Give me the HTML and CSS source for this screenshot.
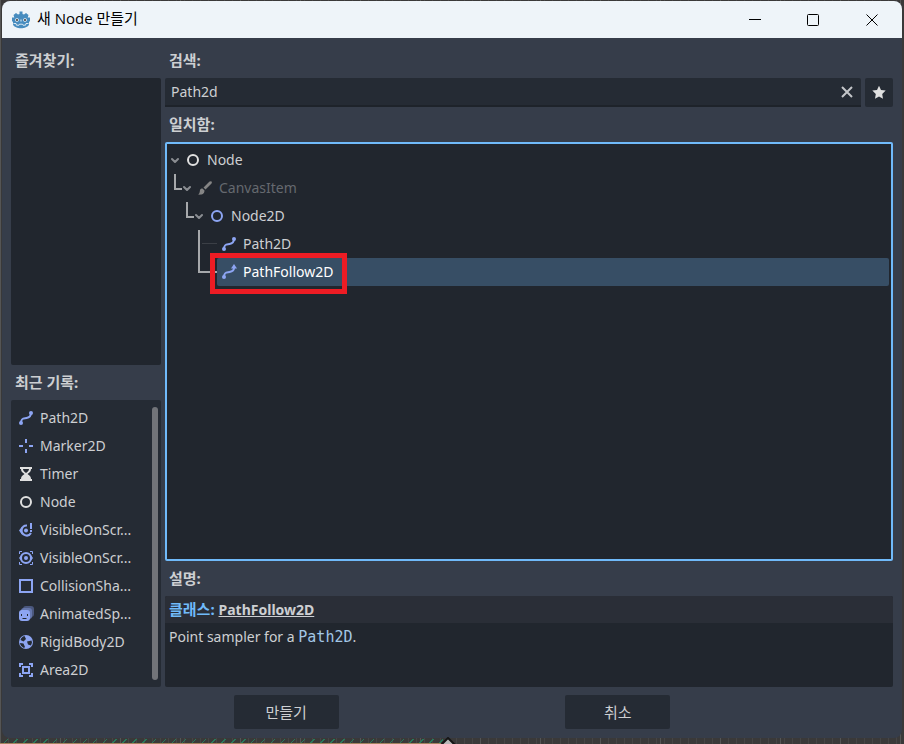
FILE: index.html
```html
<!DOCTYPE html>
<html lang="ko">
<head>
    <meta charset="UTF-8">
    <meta name="viewport" content="width=device-width, initial-scale=1.0">
    <title>새 Node 만들기</title>
    <link rel="stylesheet" href="styles.css">
</head>
<body>
    <!-- Shared icons -->
    <svg class="sprite" aria-hidden="true">
        <symbol id="path" viewBox="0 0 16 16">
            <path d="M3 13C3 7.500 6 8.500 8.500 8S13 6.500 13 3" fill="none" stroke="#8da5f3" stroke-width="2"/>
            <circle cx="3" cy="13" r="2" fill="#8da5f3"/>
            <circle cx="13" cy="3" r="2" fill="#8da5f3"/>
        </symbol>
        <symbol id="path-follow" viewBox="0 0 16 16">
            <path d="M3 13C3 7.500 6 8.500 8.500 8S13 6.500 13 4" fill="none" stroke="#8da5f3" stroke-width="2"/>
            <circle cx="3" cy="13" r="2" fill="#8da5f3"/>
            <path d="M13 0l3 4.500h-6z" fill="#8da5f3"/>
        </symbol>
        <symbol id="node" viewBox="0 0 16 16">
            <circle cx="8" cy="8" r="5" fill="none" stroke="currentColor" stroke-width="2"/>
        </symbol>
        <symbol id="arrow" viewBox="0 0 8 16">
            <path d="M1 7l3 3 3-3" fill="none" stroke="#8a8d92" stroke-width="2" stroke-linecap="round" stroke-linejoin="round"/>
        </symbol>
        <symbol id="guide" viewBox="0 0 12 28">
            <path d="M4 0v15h7" fill="none" stroke="#a6a8ab" stroke-width="2"/>
        </symbol>
    </svg>

    <main class="window">
        <header class="titlebar">
            <svg class="logo" viewBox="0 0 18 18" aria-hidden="true">
                <path d="M1.500 4l2.500-2 2 1.500L7.500 3 7.500.5h3V3l1.500.5L14 2l2.500 2-.8 2.500L18 6.500v4h-1v3c-2 5-14 5-16 0v-3H0v-4l2.300 0z" fill="#478cbf"/>
                <circle cx="5" cy="9" r="1.800" fill="#fff"/>
                <circle cx="13" cy="9" r="1.800" fill="#fff"/>
                <circle cx="5" cy="9" r="1.100" fill="#414042"/>
                <circle cx="13" cy="9" r="1.100" fill="#414042"/>
                <path d="M9 8.500v2" stroke="#e4eef5"/>
                <path d="M1.500 12.500h2.500l.5 1.700h2.500l.5-1h3l.5 1h2.500l.5-1.700h2.500" fill="none" stroke="#fff" stroke-width=".8"/>
            </svg>
            <h1 class="title">새 Node 만들기</h1>
            <div class="window-controls">
                <button type="button" aria-label="최소화"><svg viewBox="0 0 12 12"><path d="M0 5.500h12"/></svg></button>
                <button type="button" aria-label="최대화"><svg viewBox="0 0 12 12"><rect x=".5" y=".5" width="11" height="11" rx="1"/></svg></button>
                <button type="button" aria-label="닫기"><svg viewBox="0 0 12 12"><path d="M.5.5l11 11M11.500.5l-11 11"/></svg></button>
            </div>
        </header>

        <div class="content">
            <div class="columns">
                <aside class="sidebar">
                    <h2 class="label">즐겨찾기:</h2>
                    <div class="favorites"></div>

                    <h2 class="label">최근 기록:</h2>
                    <div class="recent">
                        <ul class="recent-list">
                            <li><button type="button"><svg class="icon"><use href="#path"/></svg>Path2D</button></li>
                            <li><button type="button"><svg class="icon" viewBox="0 0 16 16"><path d="M8 1v4M8 11v4M1 8h4M11 8h4" stroke="#8da5f3" stroke-width="2"/></svg>Marker2D</button></li>
                            <li><button type="button"><svg class="icon" viewBox="0 0 16 16"><path d="M2 1h12v2h-1c0 2-1 3.500-3.500 5 2.500 1.500 3.500 3 3.500 5h1v2H2v-2h1c0-2 1-3.500 3.500-5C4 6.500 3 5 3 3H2zM5 3c0 1.500 1 2.500 3 4 2-1.500 3-2.500 3-4z" fill="#e0e0e0" fill-rule="evenodd"/></svg>Timer</button></li>
                            <li><button type="button"><svg class="icon"><use href="#node"/></svg>Node</button></li>
                            <li><button type="button"><svg class="icon" viewBox="0 0 16 16"><path d="M9 3.500a5 5 0 1 0 4 7.500" fill="none" stroke="#8da5f3" stroke-width="2"/><path d="M1 8.500l3-4v8z" fill="#8da5f3"/><circle cx="8" cy="8.500" r="2" fill="#8da5f3"/><path d="M12 1h2v6h-2zM12 8h2v2h-2z" fill="#8da5f3"/></svg>VisibleOnScr...</button></li>
                            <li><button type="button"><svg class="icon" viewBox="0 0 16 16"><path d="M1.500 4V1.500H4M12 1.500h2.500V4M14.500 12v2.500H12M4 14.500H1.500V12" fill="none" stroke="#8da5f3"/><path d="M1 8l3-4v8zM15 8l-3-4v8z" fill="#8da5f3"/><circle cx="8" cy="8" r="5" fill="none" stroke="#8da5f3" stroke-width="2"/><circle cx="8" cy="8" r="2" fill="#8da5f3"/></svg>VisibleOnScr...</button></li>
                            <li><button type="button"><svg class="icon" viewBox="0 0 16 16"><path d="M2 2h12v12H2z" fill="none" stroke="#8da5f3" stroke-width="2"/></svg>CollisionSha...</button></li>
                            <li><button type="button"><svg class="icon" viewBox="0 0 16 16"><rect x="5" y="0" width="11" height="11" rx="3" fill="#4b587e"/><rect x="3" y="2" width="11" height="11" rx="3" fill="#6577ad"/><rect x="1" y="4" width="11" height="11" rx="3" fill="#8da5f3"/><path d="M3 8h1v2H3zM9 8h1v2H9zM4 12h5l-1 1H5z" fill="#252b34"/></svg>AnimatedSp...</button></li>
                            <li><button type="button"><svg class="icon" viewBox="0 0 16 16"><circle cx="8" cy="8" r="7" fill="#8da5f3"/><path d="M6.500 2C4.500 2.500 3 4 2.500 6l3 1.500L8 5zM9 7.500l4.500-1 .5 2-1 3-3-1zM2 9l3.500.5L7 13l-1 1c-2-1-4-3-4-5z" fill="#252b34"/></svg>RigidBody2D</button></li>
                            <li><button type="button"><svg class="icon" viewBox="0 0 16 16"><path d="M2 5V2h3M11 2h3v3M14 11v3h-3M5 14H2v-3M5 5h6v6H5z" fill="none" stroke="#8da5f3" stroke-width="2"/></svg>Area2D</button></li>
                        </ul>
                        <div class="scrollbar"></div>
                    </div>
                </aside>

                <section class="main">
                    <label class="label" for="search">검색:</label>
                    <div class="search-row">
                        <div class="search-box">
                            <input type="text" id="search" value="Path2d">
                            <button type="button" class="clear" aria-label="지우기"><svg viewBox="0 0 12 12"><path d="M1 1l10 10M11 1L1 11" stroke="#c4c6c9" stroke-width="2"/></svg></button>
                        </div>
                        <button type="button" class="star" aria-label="즐겨찾기"><svg class="icon" viewBox="0 0 16 16"><path d="M8 1.700L6 6 1.300 6.500l3.500 3.400-.8 4.900L8 12.500l4 2.300-.8-4.900 3.500-3.400L10 6z" fill="#e0e0e0"/></svg></button>
                    </div>

                    <h2 class="label">일치함:</h2>
                    <ul class="tree" role="tree">
                        <li class="row" role="treeitem">
                            <svg class="arrow"><use href="#arrow"/></svg>
                            <span class="item"><svg class="icon"><use href="#node"/></svg>Node</span>
                        </li>
                        <li class="row" role="treeitem">
                            <svg class="guide"><use href="#guide"/></svg>
                            <svg class="arrow"><use href="#arrow"/></svg>
                            <span class="item disabled"><svg class="icon" viewBox="0 0 16 16"><path d="M14.500 1.500c-.6-.6-1.400-.4-2 .1L6.500 7.500l2 2 6-6c.5-.6.500-1.400 0-2zM5.500 8.500C3 8.500 3 10 2.800 11.500 2.600 13 2 14 1 14.500c3 .5 6.500 0 6.500-4z" fill="#858585"/></svg>CanvasItem</span>
                        </li>
                        <li class="row level-2" role="treeitem">
                            <svg class="guide"><use href="#guide"/></svg>
                            <svg class="arrow"><use href="#arrow"/></svg>
                            <span class="item"><svg class="icon blue"><use href="#node"/></svg>Node2D</span>
                        </li>
                        <li class="row level-3" role="treeitem">
                            <svg class="guide-wide" viewBox="0 0 22 28"><path d="M4 0v28" stroke="#a6a8ab" stroke-width="2"/><path d="M7 13.500h15" stroke="#3b3f46"/></svg>
                            <span class="item"><svg class="icon"><use href="#path"/></svg>Path2D</span>
                        </li>
                        <li class="row level-3" role="treeitem" aria-selected="true">
                            <svg class="guide-wide" viewBox="0 0 22 28"><path d="M4 0v14h18" fill="none" stroke="#a6a8ab" stroke-width="2"/></svg>
                            <span class="item selected"><svg class="icon"><use href="#path-follow"/></svg>PathFollow2D</span>
                            <span class="highlight"></span>
                        </li>
                    </ul>

                    <h2 class="label">설명:</h2>
                    <div class="description">
                        <p class="class-name">클래스: <a href="#">PathFollow2D</a></p>
                        <p class="summary">Point sampler for a <code>Path2D</code>.</p>
                    </div>
                </section>
            </div>

            <footer class="actions">
                <button type="button">만들기</button>
                <button type="button">취소</button>
            </footer>
        </div>
    </main>
    <svg class="timeline-key" viewBox="0 0 16 16" aria-hidden="true"><path d="M8 1l7 7-7 7-7-7z" fill="#b8b8b8" stroke="#161616" stroke-width="2"/></svg>
</body>
</html>
```

FILE: styles.css
```css
* {
    box-sizing: border-box;
}

body {
    margin: 0;
    height: 100vh;
    padding: 1px 2px 6px;
    overflow: hidden;
    font-family: "Noto Sans", "Noto Sans CJK KR", sans-serif;
    font-size: 14px;
    line-height: 18px;
    color: #cdcfd2;
    /* editor showing around the dialog */
    background:
        linear-gradient(#a5835f, #a5835f) left bottom / 49% 1px no-repeat,
        repeating-linear-gradient(135deg, transparent 0 5px, #277a5c 5px 6px, transparent 6px 7px) left bottom / 49% 5px no-repeat,
        repeating-linear-gradient(90deg, #555 0 1px, transparent 1px 60px),
        repeating-linear-gradient(90deg, #464545 0 1px, #3a3939 1px 8px);
}

h1, h2, p, ul {
    margin: 0;
    padding: 0;
    font-size: 14px;
}

ul {
    list-style: none;
}

button {
    padding: 0;
    border: 0;
    background: none;
    color: inherit;
    font: inherit;
}

svg {
    display: block;
    flex: none;
}

.sprite {
    display: none;
}

.icon {
    width: 16px;
    height: 16px;
    color: #e0e0e0;
}

.icon.blue {
    color: #8da5f3;
}

.window {
    display: flex;
    flex-direction: column;
    height: 100%;
    overflow: hidden;
    border-radius: 8px;
    background: #363d4a;
}

/* Title bar */
.titlebar {
    display: flex;
    align-items: center;
    height: 37px;
    padding-left: 10px;
    background: #eef4f9;
    color: #000;
}

.logo {
    width: 18px;
    height: 18px;
}

.title {
    flex: 1;
    margin-left: 7px;
    padding-bottom: 3px;
    font-family: "Open Sans", "Noto Sans CJK KR", sans-serif;
    font-size: 15px;
    font-weight: 400;
    line-height: 20px;
}

.window-controls {
    display: flex;
}

.window-controls button {
    display: flex;
    align-items: center;
    justify-content: center;
    width: 58px;
    height: 36px;
}

.window-controls button:last-child {
    width: 60px;
}

.window-controls svg {
    width: 12px;
    height: 12px;
    fill: none;
    stroke: #000;
}

/* Layout */
.content {
    display: flex;
    flex: 1;
    flex-direction: column;
    gap: 8px;
    min-height: 0;
    padding: 9px;
}

.columns {
    display: flex;
    flex: 1;
    gap: 4px;
    min-height: 0;
}

.sidebar,
.main {
    display: flex;
    flex-direction: column;
    gap: 4px;
}

.sidebar {
    width: 150px;
}

.main {
    flex: 1;
    min-width: 0;
}

.label {
    flex: none;
    height: 27px;
    padding-left: 4px;
    font-size: 15px;
    font-weight: 700;
    line-height: 27px;
}

.favorites,
.recent {
    flex: 1 1 8px;
    min-height: 0;
    border-radius: 2px;
}

.favorites {
    background: #21262e;
}

/* Recent list */
.recent {
    display: flex;
    overflow: hidden;
    padding: 4px 3px 4px 7px;
    background: #252b34;
}

.recent-list {
    flex: 1;
    min-width: 0;
}

.recent-list button {
    display: flex;
    align-items: center;
    gap: 6px;
    width: 100%;
    height: 28px;
    text-align: left;
    white-space: nowrap;
}

.scrollbar {
    width: 6px;
    margin: 3px 0;
    border-radius: 3px;
    background: #727479;
}

/* Search */
.search-row {
    display: flex;
    gap: 4px;
    height: 29px;
}

.search-box {
    display: flex;
    flex: 1;
    border-bottom: 2px solid #1e232a;
    border-radius: 2px 2px 0 0;
    background: #252b34;
}

.search-box input {
    flex: 1;
    min-width: 0;
    padding: 0 6px;
    border: 0;
    outline: 0;
    background: none;
    color: #cdcfd2;
    font: inherit;
}

.clear {
    display: flex;
    align-items: center;
    justify-content: center;
    width: 28px;
}

.clear svg {
    width: 12px;
    height: 12px;
}

.star {
    display: flex;
    align-items: center;
    justify-content: center;
    width: 28px;
    padding-bottom: 2px;
    border-radius: 2px;
    background: #252b34;
}

/* Tree */
.tree {
    flex: 1;
    min-height: 0;
    padding: 2px 2px 2px 4px;
    border: 2px solid #70bafa;
    border-radius: 2px;
    background: #21262e;
}

.row {
    display: flex;
    align-items: center;
    position: relative;
    height: 28px;
}

.level-2 {
    padding-left: 12px;
}

.level-3 {
    padding-left: 24px;
}

.arrow {
    width: 8px;
    height: 16px;
}

.guide {
    width: 12px;
    height: 28px;
}

.guide-wide {
    width: 22px;
    height: 28px;
}

.item {
    display: flex;
    flex: 1;
    align-items: center;
    gap: 6px;
    height: 28px;
    padding-left: 4px;
    border-radius: 2px;
}

.arrow + .item {
    padding-left: 6px;
}

.disabled {
    color: #65696f;
}

.selected {
    background: #374e65;
    color: #fff;
}

.highlight {
    position: absolute;
    top: -5px;
    left: 39px;
    width: 137px;
    height: 41px;
    border: 5px solid #ed1c24;
}

/* Description */
.description {
    height: 91px;
    overflow: hidden;
    border-radius: 2px;
    background: #21262e;
}

.class-name,
.summary {
    padding: 0 4px;
    line-height: 27px;
}

.class-name {
    background: #2a2e37;
    color: #70bafa;
    font-size: 15px;
    font-weight: 700;
}

.class-name a {
    color: #cdcfd2;
    font-size: 14px;
}

.summary code {
    color: #a3c7e6;
    font-family: "DejaVu Sans Mono", monospace;
    font-size: 15px;
}

/* Buttons */
.actions {
    display: flex;
    justify-content: space-evenly;
    gap: 4px;
}

.actions button {
    width: 105px;
    height: 34px;
    border-radius: 2px;
    background: #252b34;
    font-size: 15px;
}

.timeline-key {
    position: absolute;
    bottom: -9px;
    left: 440px;
    width: 16px;
    height: 16px;
}
```
